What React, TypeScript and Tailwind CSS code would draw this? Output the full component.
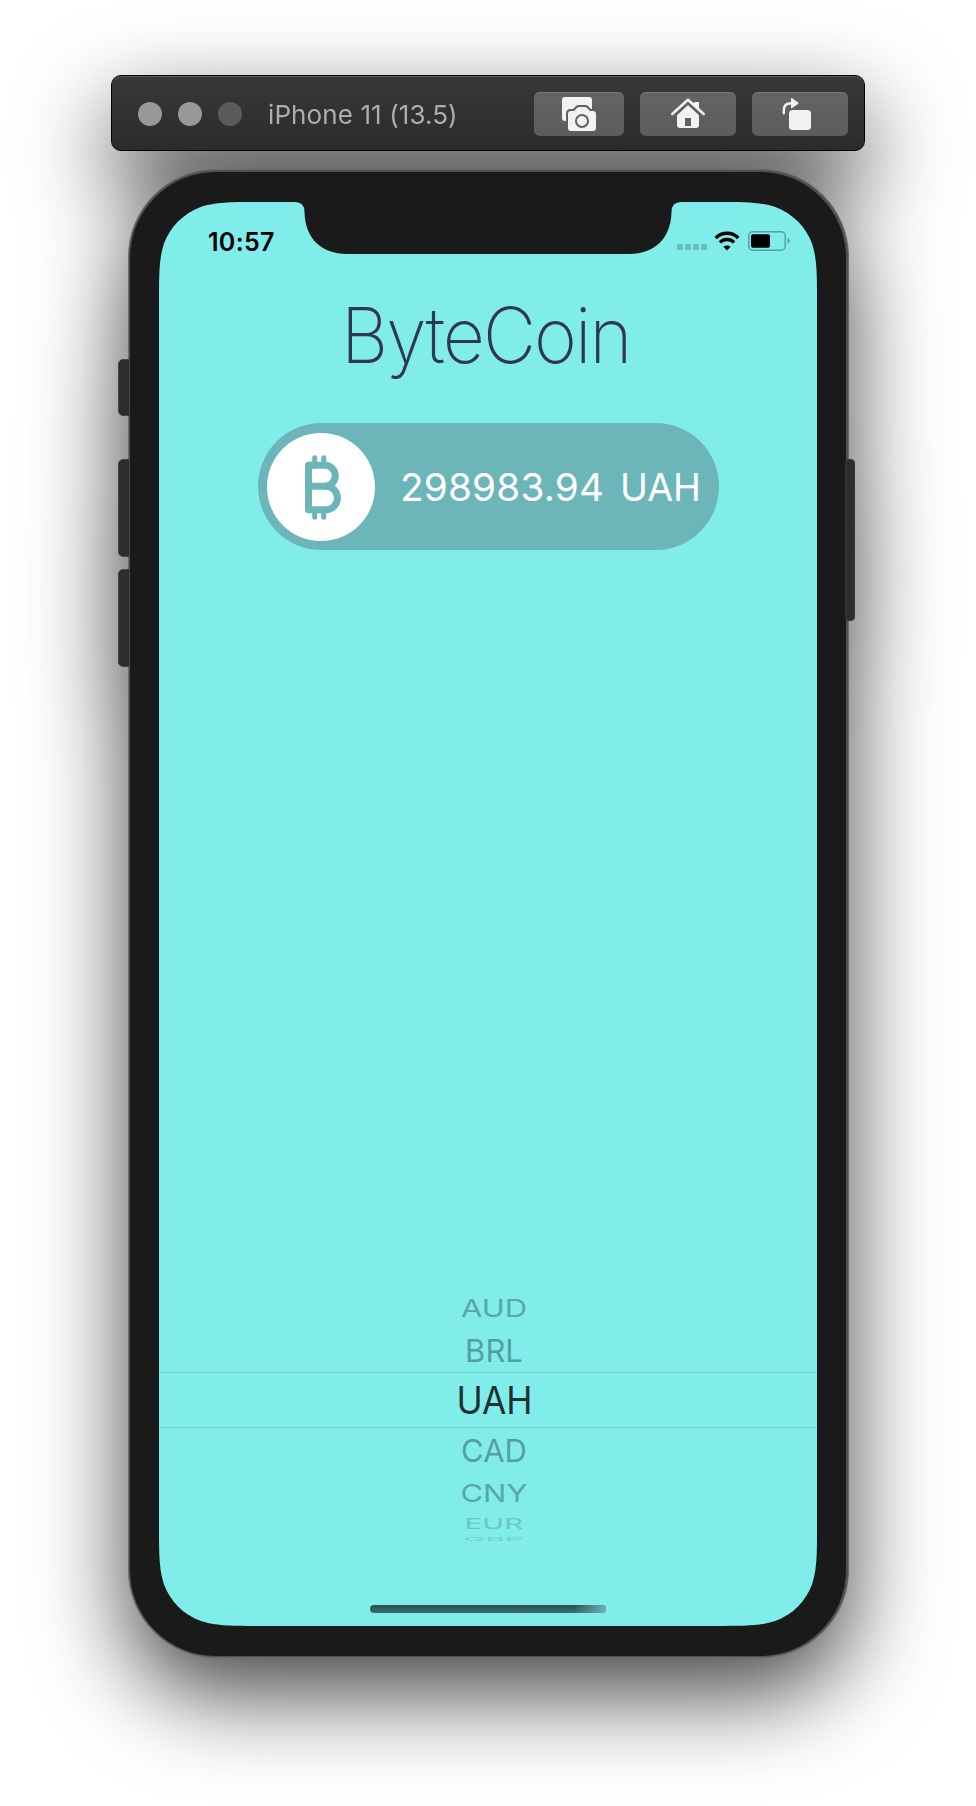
import React from "react";

type PickerRow = { code: string; box: string; text: string };

const pickerRows: PickerRow[] = [
  { code: "AUD", box: "h-[39px]", text: "text-[31px] text-[#5aa7a6] scale-y-[0.77]" },
  { code: "BRL", box: "h-[45px]", text: "text-[31px] text-[#55a09f]" },
  { code: "UAH", box: "h-[56px]", text: "text-[37.500px] text-[#1e3030] scale-x-[0.94]" },
  { code: "CAD", box: "h-[42px]", text: "text-[31px] text-[#55a09f]" },
  { code: "CNY", box: "h-[42px]", text: "text-[31px] text-[#5aa7a6] scale-y-[0.8]" },
  { code: "EUR", box: "h-[21px]", text: "text-[28px] text-[#6bc6c5] scale-x-[1.050] scale-y-[0.54]" },
  { code: "GBP", box: "h-[9px]", text: "text-[28px] text-[#70d0ce] scale-x-[1.050] scale-y-[0.19]" },
];

function TitleBar() {
  return (
    <div className="relative z-10 ml-[111px] flex h-[76px] w-[754px] items-center rounded-[10px] border border-black bg-gradient-to-b from-[#383838] to-[#2b2b2b] pl-[26px] pt-[2px] shadow-[inset_0_1px_0_#5c5c5c]">
      <div className="flex gap-4">
        <span className="size-6 rounded-full bg-[#989898]" />
        <span className="size-6 rounded-full bg-[#989898]" />
        <span className="size-6 rounded-full bg-[#5b5b5b]" />
      </div>
      <div className="ml-[26px] w-[266px] whitespace-nowrap pt-[1px] text-[26px] leading-8 tracking-[0.1px] text-[#adadad]">
        iPhone 11 (13.5)
      </div>
      <div className="flex gap-4">
        <ToolButton wide={false}>
          <svg width="36" height="36" viewBox="0 0 36 36" className="-ml-[1px]">
            <rect x="1" y="1" width="30" height="24" rx="3" fill="#f2f2f2" />
            <path d="M5 36V17.500Q5 13 9.500 13H12L15 10Q16 9 18 9H24Q26 9 27 10L30 13H36V36Z" fill="#606060" />
            <path d="M7 18Q7 15 10 15H13L16 12Q17 11 18.500 11H23.500Q25 11 26 12L29 15H32Q35 15 35 18V32Q35 35 32 35H10Q7 35 7 32Z" fill="#f2f2f2" />
            <circle cx="21" cy="25" r="6" fill="none" stroke="#606060" strokeWidth="2" />
          </svg>
        </ToolButton>
        <ToolButton wide>
          <svg width="36" height="32" viewBox="0 0 36 32">
            <path d="M24 4.500Q24 4 25 4H28Q29 4 29 5V12L24 7.500Z" fill="#f2f2f2" />
            <path d="M18 7L29 17V27Q29 30 26 30H10Q7 30 7 27V17Z" fill="#f2f2f2" />
            <path d="M4 18.500L18 5.300L32 18.500" fill="none" stroke="#606060" strokeWidth="2" />
            <path d="M2.300 16L18 1.800L33.700 16" fill="none" stroke="#f2f2f2" strokeWidth="2.600" strokeLinecap="round" strokeLinejoin="round" />
            <rect x="15" y="20" width="6" height="8" fill="#606060" />
          </svg>
        </ToolButton>
        <ToolButton wide>
          <svg width="32" height="34" viewBox="0 0 32 34" className="-ml-[7px]">
            <rect x="8" y="13" width="22" height="20" rx="3.500" fill="#f2f2f2" />
            <path d="M2.800 16.300V13.500Q2.800 6.300 10 6.300H11" fill="none" stroke="#f2f2f2" strokeWidth="2.400" strokeLinecap="round" />
            <path d="M10 1.800Q10 0.500 11.200 1.300L17 5.400Q18 6.200 17 7L11.200 11Q10 11.800 10 10.500Z" fill="#f2f2f2" />
          </svg>
        </ToolButton>
      </div>
    </div>
  );
}

function ToolButton({ wide, children }: { wide: boolean; children: React.ReactNode }) {
  return (
    <button
      className={
        (wide ? "w-24" : "w-[90px]") +
        " flex h-11 items-center justify-center rounded-[6px] bg-gradient-to-b from-[#646464] to-[#5c5c5c] shadow-[inset_0_1px_0_#7a7a7a]"
      }
    >
      {children}
    </button>
  );
}

function StatusBar() {
  return (
    <div className="flex h-[80px] items-start justify-between pl-[49px] pr-[27px] text-black">
      <span className="mt-[24px] text-[25px] font-semibold leading-[32px] tracking-[0.300px]">10:57</span>
      <div className="mt-[29px] flex items-start">
        <div className="mt-[13px] flex gap-[2px]">
          {[0, 1, 2, 3].map((i) => (
            <span key={i} className="size-[6px] rounded-[1.500px] bg-[#67bdbc]" />
          ))}
        </div>
        <svg width="26" height="20" viewBox="0 0 26 20" className="ml-[7px]">
          <path d="M1.700 7A16 16 0 0 1 24.300 7" fill="none" stroke="#000" strokeWidth="3.500" />
          <path d="M5.900 11.400A10.200 10.200 0 0 1 20.100 11.400" fill="none" stroke="#000" strokeWidth="3.300" />
          <path d="M13 19.500L9.400 15.800A5.300 5.300 0 0 1 16.600 15.800Z" fill="#000" />
        </svg>
        <svg width="42" height="20" viewBox="0 0 42 20" className="ml-2">
          <rect x="0.800" y="0.800" width="36.400" height="18.400" rx="4" fill="none" stroke="#57a0a0" strokeWidth="1.500" />
          <rect x="3" y="3.300" width="19" height="13.400" rx="2" fill="#000" />
          <path d="M39.500 7Q41.800 8 41.800 10T39.500 13Z" fill="#57a0a0" />
        </svg>
      </div>
    </div>
  );
}

function CoinCard() {
  return (
    <div className="ml-[99px] flex h-[127px] w-[461px] items-center rounded-full bg-[#6cb6ba] pl-[9px] text-white">
      <div className="flex size-[108px] shrink-0 items-center justify-center rounded-full bg-white">
        <svg width="36" height="66" viewBox="0 0 36 66" className="ml-[4px] mt-[3px]" fill="none" stroke="#6cb6ba">
          <path d="M3.500 10.200H19.700A10.550 10.550 0 0 1 19.700 31.300H3.500" strokeWidth="7" />
          <path d="M19.700 31.300H20.700A11.750 11.750 0 0 1 20.700 54.800H3.500V10.200H10" strokeWidth="7" strokeLinejoin="round" />
          <path d="M9.700 2.700V10M18.700 2.700V10M9.700 55V62.300M18.700 55V62.300" strokeWidth="5" strokeLinecap="round" />
        </svg>
      </div>
      <div className="flex items-baseline whitespace-nowrap text-[38.700px] leading-[48px]">
        <span className="ml-[25px] w-[220px] tracking-[0.200px]">298983.94</span>
        <span className="inline-block origin-left scale-x-[0.970]">UAH</span>
      </div>
    </div>
  );
}

function CurrencyPicker() {
  return (
    <div className="relative mt-[733px] h-[260px]">
      <div className="absolute inset-x-0 top-[89px] h-[56px] border-y border-[#6fcfce]" />
      <div className="ml-[12px] flex flex-col items-center pt-[6px]">
        {pickerRows.map((row) => (
          <div key={row.code} className={row.box + " flex items-center justify-center"}>
            <span className={row.text + " inline-block leading-none"}>{row.code}</span>
          </div>
        ))}
      </div>
    </div>
  );
}

function Phone() {
  return (
    <div className="relative ml-[127.500px] mt-[18px] w-[721px]">
      <div className="absolute -left-[9.500px] top-[190px] h-[57px] w-3 rounded-l-[5px] border border-[#464646] bg-[#2d2d2d]" />
      <div className="absolute -left-[9.500px] top-[290px] h-[98px] w-3 rounded-l-[5px] border border-[#464646] bg-[#2d2d2d]" />
      <div className="absolute -left-[9.500px] top-[400px] h-[98px] w-3 rounded-l-[5px] border border-[#464646] bg-[#2d2d2d]" />
      <div className="h-[1489px] rounded-[88px] border border-[#6a6a6a] bg-[#505050] p-[1.500px]">
        <div className="h-full rounded-[86px] bg-[#1a1a1a] pl-[29px] pt-[30.500px]">
          <div className="relative h-[1424px] w-[658px] bg-[#81edeb] [clip-path:path('M100.9_0H557.1C586.2_0_600.7_0_616.3_4.9C633.4_11.2_646.8_24.6_653.1_41.7C658_57.3_658_71.8_658_100.9V1323.1C658_1352.2_658_1366.7_653.1_1382.3C646.8_1399.4_633.4_1412.8_616.3_1419.1C600.7_1424_586.2_1424_557.1_1424H100.9C71.8_1424_57.3_1424_41.7_1419.1C24.6_1412.8_11.2_1399.4_4.9_1382.3C0_1366.7_0_1352.2_0_1323.1V100.9C0_71.8_0_57.3_4.9_41.7C11.2_24.6_24.6_11.2_41.7_4.9C57.3_0_71.8_0_100.9_0Z')]">
            <svg width="386" height="53" viewBox="0 0 386 53" className="absolute left-[136px] top-0">
              <path d="M0 0Q9.500 0 9.500 10C10 36 26 52 52 52H334C360 52 376 36 376.500 10Q376.500 0 386 0Z" fill="#1a1a1a" />
            </svg>
            <StatusBar />
            <h1 className="ml-[182px] h-[141px] whitespace-nowrap text-[77px] font-extralight leading-[107px] tracking-[-2px] text-[#30384e]">
              <span className="inline-block origin-left scale-x-[0.95]">ByteCoin</span>
            </h1>
            <CoinCard />
            <CurrencyPicker />
            <div className="ml-[211px] mt-[62px] h-2 w-[236px] overflow-hidden rounded-full bg-gradient-to-b from-[#284e50] to-[#3c6f71]">
              <div className="ml-auto h-full w-8 bg-gradient-to-r from-transparent to-[#6bb3b3]" />
            </div>
          </div>
        </div>
      </div>
      <div className="absolute -right-[6px] top-[290px] h-[162px] w-[10px] rounded-[4px] border border-[#383838] bg-[#2d2d2d]" />
    </div>
  );
}

export default function App() {
  return (
    <main className="h-[1806px] w-[976px] overflow-hidden bg-white font-['Inter',sans-serif]">
      <div className="pt-[75px] [filter:drop-shadow(0_36px_46px_rgba(0,0,0,0.73))]">
        <TitleBar />
        <Phone />
      </div>
    </main>
  );
}
